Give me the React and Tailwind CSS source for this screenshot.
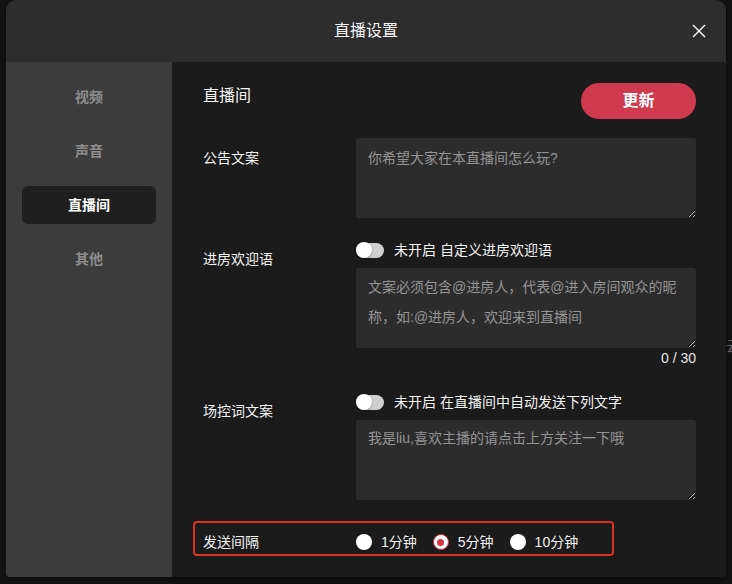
import React, { useState } from "react";

const tabs = ["视频", "声音", "直播间", "其他"];

const Toggle = () => (
  <span className="relative inline-flex w-[28px] h-[15px] rounded-full bg-[#cfcfcf] shrink-0">
    <span className="absolute left-0 top-[-0.5px] w-[16px] h-[16px] rounded-full bg-white shadow-[0_1px_2px_rgba(0,0,0,0.35)]" />
  </span>
);

const Radio = ({ checked, label, onClick }) => (
  <button type="button" onClick={onClick} className="flex items-center gap-[9px] text-[14px] leading-[20px] text-[#f2f2f2]">
    {checked ? (
      <span className="w-[16px] h-[16px] rounded-full bg-white border-[1.5px] border-[#d8343f] flex items-center justify-center">
        <span className="w-[7px] h-[7px] rounded-full bg-[#d8343f]" />
      </span>
    ) : (
      <span className="w-[16px] h-[16px] rounded-full bg-white" />
    )}
    {label}
  </button>
);

export default function App() {
  const [tab, setTab] = useState("直播间");
  const [interval, setInterval] = useState("5分钟");

  return (
    <div className="relative w-[732px] h-[584px] bg-[#131313] overflow-hidden font-['Liberation_Sans','Noto_Sans_CJK_SC',sans-serif]">
      {/* page behind the dialog, peeking out on the right */}
      <span className="absolute left-[726px] top-[336px] text-[14px] text-[#6e6e6e]">云</span>

      <div className="relative ml-[6px] w-[720px] h-[577px] rounded-t-[10px] rounded-b-[4px] overflow-hidden flex flex-col shadow-[0_2px_8px_rgba(0,0,0,0.5)]">
        {/* header */}
        <div className="h-[62px] shrink-0 bg-[#2d2d2d] flex items-center justify-center relative">
          <span className="text-[16px] text-[#f5f5f5]">直播设置</span>
          <button className="absolute right-[20px] top-[24px] w-[14px] h-[14px]">
            <svg width="14" height="14" viewBox="0 0 14 14">
              <path d="M1 1L13 13M13 1L1 13" stroke="#ffffff" strokeWidth="1.4" />
            </svg>
          </button>
        </div>

        <div className="flex flex-1">
          {/* sidebar */}
          <div className="w-[166px] bg-[#3c3c3c] flex flex-col gap-[16px] pt-[16px] px-[16px]">
            {tabs.map((t) => (
              <button
                key={t}
                onClick={() => setTab(t)}
                className={
                  t === tab
                    ? "h-[38px] rounded-[6px] bg-[#1f1f1f] text-white font-bold text-[14px]"
                    : "h-[38px] rounded-[6px] text-[#8d8d8d] font-bold text-[14px]"
                }
              >
                {t}
              </button>
            ))}
          </div>

          {/* content */}
          <div className="flex-1 bg-[#1b1b1b] pl-[31px] pr-[30px] pt-[21px] flex flex-col">
            <div className="flex justify-between items-start h-[36px]">
              <h2 className="text-[16px] leading-[24px] text-[#f5f5f5] mt-[1px]">直播间</h2>
              <button className="w-[115px] h-[36px] rounded-full bg-[#cf3a4e] text-white font-bold text-[16px]">更新</button>
            </div>

            {/* 公告文案 */}
            <div className="flex mt-[19px]">
              <label className="w-[153px] text-[14px] leading-[20px] text-[#f2f2f2] mt-[10px]">公告文案</label>
              <textarea
                placeholder="你希望大家在本直播间怎么玩?"
                className="w-[340px] h-[80px] bg-[#2c2c2c] rounded-[3px] px-[12px] pt-[5px] text-[14px] leading-[30px] text-white placeholder:text-[#949494] outline-none"
              />
            </div>

            {/* 进房欢迎语 */}
            <div className="flex mt-[22px]">
              <label className="w-[153px] text-[14px] leading-[20px] text-[#f2f2f2] mt-[9px]">进房欢迎语</label>
              <div className="w-[340px] flex flex-col">
                <div className="flex items-center gap-[10px] h-[20px]">
                  <Toggle />
                  <span className="text-[14px] text-[#f2f2f2]">未开启 自定义进房欢迎语</span>
                </div>
                <textarea
                  placeholder="文案必须包含@进房人，代表@进入房间观众的昵称，如:@进房人，欢迎来到直播间"
                  className="mt-[8px] w-[340px] h-[80px] bg-[#2c2c2c] rounded-[3px] pl-[12px] pr-[10px] pt-[4px] text-[14px] leading-[30px] text-white placeholder:text-[#949494] outline-none"
                />
                <span className="self-end mt-[2px] text-[14px] leading-[16px] text-[#e6e6e6]">0 / 30</span>
              </div>
            </div>

            {/* 场控词文案 */}
            <div className="flex mt-[26px]">
              <label className="w-[153px] text-[14px] leading-[20px] text-[#f2f2f2] mt-[9px]">场控词文案</label>
              <div className="w-[340px] flex flex-col">
                <div className="flex items-center gap-[10px] h-[20px]">
                  <Toggle />
                  <span className="text-[14px] text-[#f2f2f2]">未开启 在直播间中自动发送下列文字</span>
                </div>
                <textarea
                  placeholder="我是liu,喜欢主播的请点击上方关注一下哦"
                  className="mt-[8px] w-[340px] h-[80px] bg-[#2c2c2c] rounded-[3px] px-[12px] pt-[3px] text-[14px] leading-[30px] text-white placeholder:text-[#949494] outline-none"
                />
              </div>
            </div>

            {/* 发送间隔 */}
            <div className="-ml-[10px] mt-[21px] w-[421px] h-[35px] border-2 border-[#d9321f] rounded-[4px] flex items-start pt-[9px] pl-[8px]">
              <label className="w-[153px] text-[14px] leading-[20px] text-[#f2f2f2]">发送间隔</label>
              <div className="flex items-center gap-[16px]">
                {["1分钟", "5分钟", "10分钟"].map((v) => (
                  <Radio key={v} label={v} checked={interval === v} onClick={() => setInterval(v)} />
                ))}
              </div>
            </div>
          </div>
        </div>
      </div>
    </div>
  );
}
